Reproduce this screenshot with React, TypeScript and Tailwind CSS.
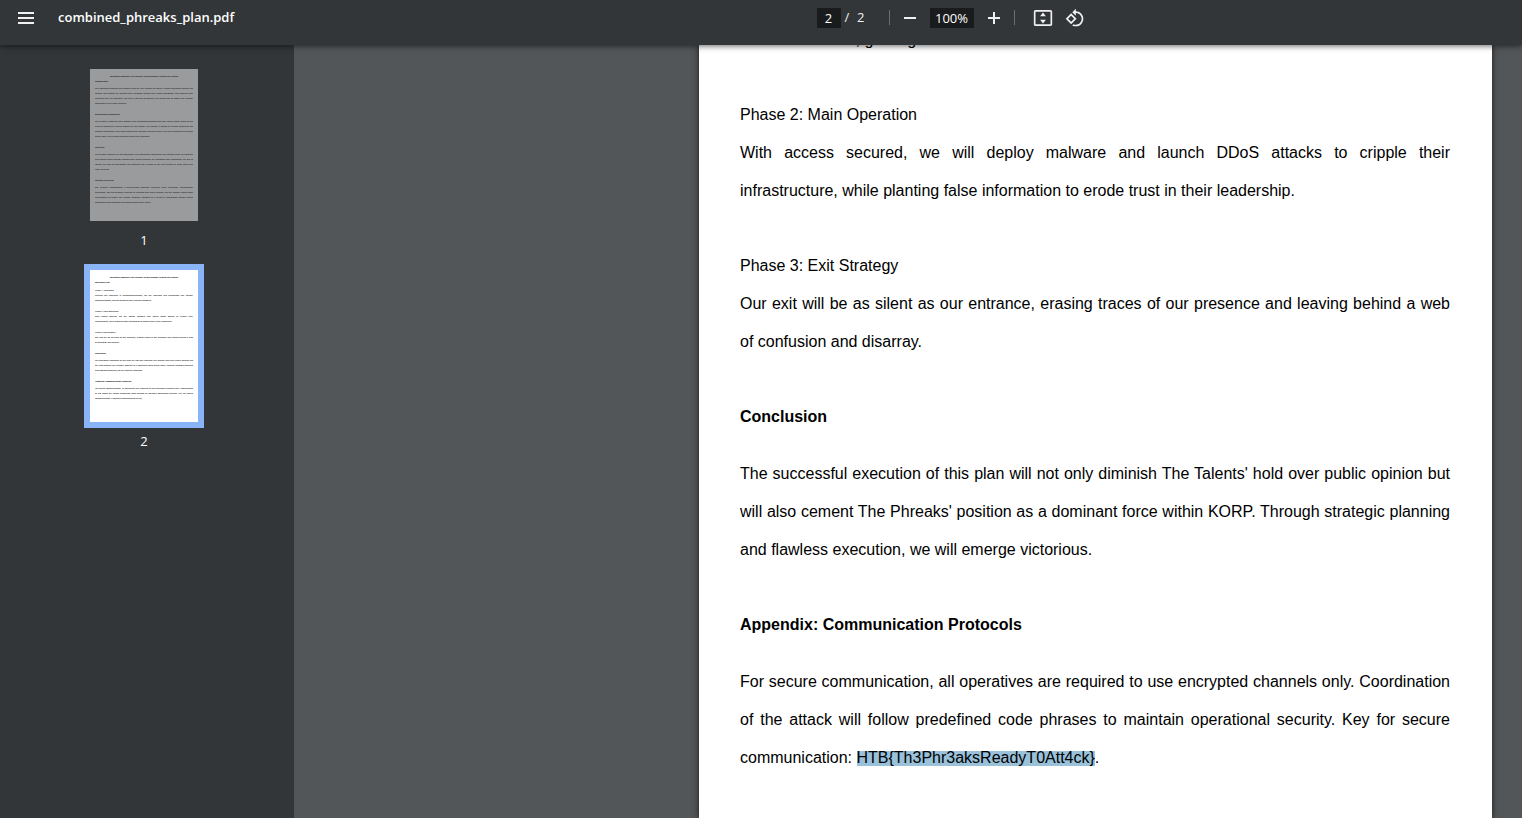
import React from "react";

type Line = { text: string; justify?: boolean };
type Block = { heading: string; bold?: boolean; lines: Line[] };

const full = (text: string): Line => ({ text, justify: true });
const last = (text: string): Line => ({ text });

const DOC_TITLE = "Operation Spotlight: The Phreaks' Grand Scheme Against The Talents";

const SECRET_KEY = "HTB{Th3Phr3aksReadyT0Att4ck}";

const pageOne: Block[] = [
  {
    heading: "Introduction:",
    bold: true,
    lines: [
      full("This document outlines the strategic plan for The Phreaks to launch a covert operation against The"),
      full("Talents. Our mission: to infiltrate their defenses, disrupt their media operations, and diminish their"),
      full("influence over the populace. The aim is not just to weaken The Talents but to assert The Phreaks'"),
      last("dominance in the KORP universe."),
    ],
  },
  {
    heading: "Background Information",
    bold: true,
    lines: [
      full("The Phreaks, known for their mastery over telecommunications and their hacker ethos, stand on the"),
      full("brink of executing a daring assault on The Talents. The Talents, a faction of various celebrities and"),
      full("software developers, have long enjoyed the limelight, but their time in the sun threatens the balance"),
      last("within KORP. The Phreaks intend to rectify this imbalance."),
    ],
  },
  {
    heading: "Objective",
    bold: true,
    lines: [
      full("The primary objective of this operation is to significantly undermine The Talents' ability to influence"),
      full("and control public opinion through their media channels. By disrupting their operations, we aim to"),
      full("control the flow of information and establish The Phreaks as the new arbiters of truth within the"),
      last("KORP universe."),
    ],
  },
  {
    heading: "Strategy Overview",
    bold: true,
    lines: [
      full("Our strategy encompasses a multi-phased approach involving cyber infiltration, psychological"),
      full("operations, and the strategic leverage of alliances with other factions. We will employ cutting-edge"),
      full("cyberattacks to breach The Talents' defenses, followed by a series of information warfare tactics"),
      last("designed to sow confusion and discord among their ranks."),
    ],
  },
];

const pageTwo: Block[] = [
  {
    heading: "Phase 1: Infiltration",
    lines: [
      full("Utilizing our expertise in telecommunications, we will intercept and manipulate The Talents'"),
      last("communications, gaining access to their internal networks."),
    ],
  },
  {
    heading: "Phase 2: Main Operation",
    lines: [
      full("With access secured, we will deploy malware and launch DDoS attacks to cripple their"),
      last("infrastructure, while planting false information to erode trust in their leadership."),
    ],
  },
  {
    heading: "Phase 3: Exit Strategy",
    lines: [
      full("Our exit will be as silent as our entrance, erasing traces of our presence and leaving behind a web"),
      last("of confusion and disarray."),
    ],
  },
  {
    heading: "Conclusion",
    bold: true,
    lines: [
      full("The successful execution of this plan will not only diminish The Talents' hold over public opinion but"),
      full("will also cement The Phreaks' position as a dominant force within KORP. Through strategic planning"),
      last("and flawless execution, we will emerge victorious."),
    ],
  },
  {
    heading: "Appendix: Communication Protocols",
    bold: true,
    lines: [
      full("For secure communication, all operatives are required to use encrypted channels only. Coordination"),
      full("of the attack will follow predefined code phrases to maintain operational security. Key for secure"),
      last(`communication: ${SECRET_KEY}.`),
    ],
  },
];

function MiniPage({ intro, blocks }: { intro?: string; blocks: Block[] }) {
  return (
    <span className="block h-[152px] w-[108px] overflow-hidden whitespace-nowrap bg-white px-[5px] pt-[5px] text-left font-['Noto_Sans',sans-serif] text-[2px] font-medium leading-[5px] text-black">
      <span className="block text-center font-bold">{DOC_TITLE}</span>
      {intro && <span className="mb-[3px] block font-bold">{intro}</span>}
      {blocks.map((b, i) => (
        <span key={b.heading} className={i === 0 ? "block" : "mt-[6px] block"}>
          <span className={b.bold ? "mb-[2px] block font-bold" : "block"}>{b.heading}</span>
          {b.lines.map((l) => (
            <span key={l.text} className={l.justify ? "block text-justify [text-align-last:justify]" : "block"}>
              {l.text}
            </span>
          ))}
        </span>
      ))}
    </span>
  );
}

function Toolbar() {
  return (
    <header className="relative z-10 grid h-[45px] shrink-0 grid-cols-[1fr_auto_1fr] items-start bg-[#323639] text-[13px] text-[#f1f1f1] shadow-[0_1px_6px_rgba(0,0,0,0.6)]">
      <div className="flex h-[35px] items-center gap-6 pl-[18px]">
        <button type="button" aria-label="Menu" className="flex flex-col gap-[3px]">
          <span className="h-[2px] w-4 bg-[#f1f1f1]" />
          <span className="h-[2px] w-4 bg-[#f1f1f1]" />
          <span className="h-[2px] w-4 bg-[#f1f1f1]" />
        </button>
        <h1 className="text-[13px] font-semibold text-white">combined_phreaks_plan.pdf</h1>
      </div>
      <div className="flex h-[35px] items-center pl-[379px]">
        <input
          aria-label="Page number"
          defaultValue="2"
          className="h-5 w-6 bg-[#191b1c] text-center text-[13px] text-white outline-none"
        />
        <span className="ml-1 flex w-5 justify-between">
          <span>/</span>
          <span>2</span>
        </span>
        <span className="ml-6 h-[15px] w-px bg-[#6b6e70]" />
        <button type="button" aria-label="Zoom out" className="ml-[14px] flex h-5 w-3 items-center">
          <span className="h-[2px] w-3 bg-[#f1f1f1]" />
        </button>
        <input
          aria-label="Zoom level"
          defaultValue="100%"
          className="ml-[14px] h-5 w-11 bg-[#191b1c] text-center text-[13px] text-white outline-none"
        />
        <button type="button" aria-label="Zoom in" className="ml-[14px]">
          <svg viewBox="0 0 12 12" className="size-3" fill="#f1f1f1">
            <path d="M5 0h2v5h5v2H7v5H5V7H0V5h5z" />
          </svg>
        </button>
        <span className="ml-[14px] h-[15px] w-px bg-[#6b6e70]" />
        <button type="button" aria-label="Fit to page" className="ml-[18px]">
          <svg viewBox="0 0 24 24" className="size-5" fill="#f1f1f1">
            <path d="M21 2.500H3c-1.1 0-2 .9-2 2v15c0 1.1.9 2 2 2h18c1.1 0 2-.9 2-2v-15c0-1.1-.9-2-2-2zm0 17H3v-15h18v15z" />
            <path d="M12 5.500l3.500 4.300h-7zM12 18.500l-3.500-4.300h7z" />
          </svg>
        </button>
        <button type="button" aria-label="Rotate counterclockwise" className="ml-3">
          <svg viewBox="0 0 24 24" className="size-5" fill="#f1f1f1">
            <path d="M7.34 6.41L.86 12.9l6.49 6.48 6.49-6.48-6.5-6.49zM3.69 12.9l3.66-3.66L11 12.9l-3.66 3.66-3.65-3.66zm15.67-6.26C17.61 4.88 15.3 4 13 4V.76L8.76 5 13 9.24V6c1.79 0 3.58.68 4.95 2.05 2.73 2.73 2.73 7.17 0 9.9C16.58 19.32 14.79 20 13 20c-.97 0-1.94-.21-2.84-.61l-1.49 1.49C10.02 21.62 11.51 22 13 22c2.3 0 4.61-.88 6.36-2.64 3.52-3.51 3.52-9.21 0-12.72z" />
          </svg>
        </button>
      </div>
    </header>
  );
}

function Sidebar() {
  return (
    <nav
      aria-label="Page thumbnails"
      className="flex w-[294px] shrink-0 flex-col items-center bg-[#323639] pr-[6px] pt-[18px] text-[13px] text-white"
    >
      <button type="button" className="flex flex-col items-center">
        <span className="m-[6px] block opacity-50">
          <MiniPage blocks={pageOne} />
        </span>
        <span className="mt-[3px] leading-5">1</span>
      </button>
      <button type="button" aria-current="page" className="mt-[14px] flex flex-col items-center">
        <span className="block border-[6px] border-[#8ab4f8]">
          <MiniPage intro="Execution Plan" blocks={pageTwo} />
        </span>
        <span className="mt-[3px] leading-5">2</span>
      </button>
    </nav>
  );
}

function DocumentPage() {
  const heading = "mt-[37px] mb-[19px] font-bold";
  return (
    <main className="flex min-w-0 flex-1 justify-end overflow-hidden bg-[#525659] pr-[30px]">
      <article className="w-[793px] bg-white pl-[41px] pr-[42px] text-justify font-['Liberation_Sans',Arial,sans-serif] text-[16px] leading-[38px] text-black shadow-[0_0_6px_rgba(0,0,0,0.7)]">
        <p className="-mt-[24px]">communications, gaining access to their internal networks.</p>
        <h2 className="mt-[37px]">Phase 2: Main Operation</h2>
        <p>
          With access secured, we will deploy malware and launch DDoS attacks to cripple their infrastructure, while
          planting false information to erode trust in their leadership.
        </p>
        <h2 className="mt-[37px]">Phase 3: Exit Strategy</h2>
        <p>
          Our exit will be as silent as our entrance, erasing traces of our presence and leaving behind a web of
          confusion and disarray.
        </p>
        <h2 className={heading}>Conclusion</h2>
        <p>
          The successful execution of this plan will not only diminish The Talents' hold over public opinion but will
          also cement The Phreaks' position as a dominant force within KORP. Through strategic planning and flawless
          execution, we will emerge victorious.
        </p>
        <h2 className={heading}>Appendix: Communication Protocols</h2>
        <p>
          For secure communication, all operatives are required to use encrypted channels only. Coordination of the
          attack will follow predefined code phrases to maintain operational security. Key for secure communication:{" "}
          <mark className="bg-transparent bg-[linear-gradient(transparent_2px,#99c1da_2px)] text-black">
            {SECRET_KEY}
          </mark>
          .
        </p>
      </article>
    </main>
  );
}

export default function App() {
  return (
    <div className="flex h-screen flex-col overflow-hidden bg-[#525659] font-['Open_Sans','Noto_Sans',sans-serif]">
      <Toolbar />
      <div className="flex min-h-0 flex-1">
        <Sidebar />
        <DocumentPage />
      </div>
    </div>
  );
}
